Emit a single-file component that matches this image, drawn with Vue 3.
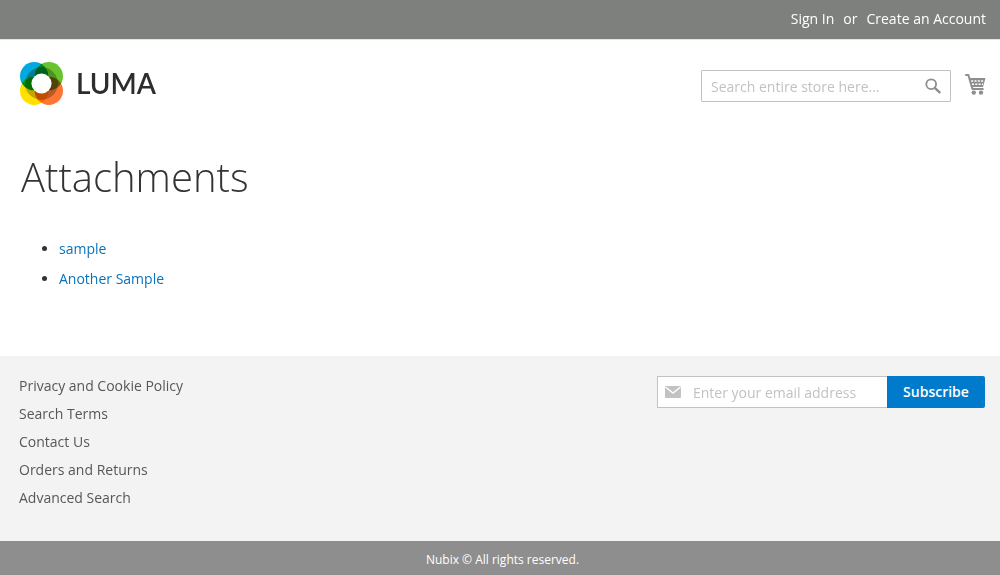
<script setup>
import { ref } from 'vue'

const query = ref('')
const email = ref('')
const attachments = ['sample', 'Another Sample']
const footerLinks = ['Privacy and Cookie Policy', 'Search Terms', 'Contact Us', 'Orders and Returns', 'Advanced Search']
</script>

<template>
  <div class="page">
    <div class="panel">
      <a href="#">Sign In</a>
      <span>or</span>
      <a href="#">Create an Account</a>
    </div>

    <header class="header">
      <a class="logo" href="#" aria-label="Luma">
        <svg class="mark" viewBox="0 0 44 44" aria-hidden="true">
          <g class="petals">
            <circle cx="14.5" cy="14.5" r="14.5" fill="#00a9e0" />
            <circle cx="29.5" cy="14.5" r="14.5" fill="#68c42c" />
            <circle cx="14.5" cy="29.5" r="14.5" fill="#ffe000" />
            <circle cx="29.5" cy="29.5" r="14.5" fill="#ff7536" />
            <circle cx="22" cy="22" r="16.8" fill="#bfbfa6" />
          </g>
          <circle cx="22" cy="22" r="10.3" fill="#fff" />
        </svg>
        <span class="wordmark">LUMA</span>
      </a>
      <form class="search" role="search" @submit.prevent>
        <input v-model="query" type="text" aria-label="Search" placeholder="Search entire store here..." />
        <button type="submit" aria-label="Search">
          <svg viewBox="0 0 16 16" width="16" height="16" aria-hidden="true">
            <circle cx="6.2" cy="6.2" r="4.9" fill="none" stroke="#8e8e8e" stroke-width="1.8" />
            <path d="M9.8 9.8 L14.6 14.3" stroke="#8e8e8e" stroke-width="2.4" stroke-linecap="round" />
          </svg>
        </button>
      </form>
      <a class="cart" href="#" aria-label="My Cart">
        <svg viewBox="0 0 21 22" width="21" height="22" aria-hidden="true">
          <path d="M1 2 H3.4 L7.4 16 H17.8" fill="none" stroke="#8e8e8e" stroke-width="2" stroke-linecap="round" stroke-linejoin="round" />
          <path d="M4 5 H20.5 L18 14 H6.6 Z" fill="#8e8e8e" />
          <path d="M6.2 8 H18.6 M7 11.3 H18" stroke="#fff" stroke-width="1.5" stroke-dasharray="2 1.3" />
          <circle cx="8.8" cy="19.6" r="2.2" fill="#8e8e8e" />
          <circle cx="16" cy="19.6" r="2.2" fill="#8e8e8e" />
        </svg>
      </a>
    </header>

    <main class="main">
      <h1>Attachments</h1>
      <ul>
        <li v-for="item in attachments" :key="item"><a href="#">{{ item }}</a></li>
      </ul>
    </main>

    <footer class="footer">
      <ul>
        <li v-for="link in footerLinks" :key="link"><a href="#">{{ link }}</a></li>
      </ul>
      <form class="newsletter" @submit.prevent>
        <div class="field">
          <svg viewBox="0 0 16 12" width="16" height="12" aria-hidden="true">
            <rect width="16" height="12" rx="1" fill="#c2c2c2" />
            <path d="M0.5 1 L8 7 L15.5 1" fill="none" stroke="#fff" stroke-width="1.4" />
          </svg>
          <input v-model="email" type="email" aria-label="Email address" placeholder="Enter your email address" />
        </div>
        <button type="submit">Subscribe</button>
      </form>
    </footer>
    <small class="copyright">Nubix © All rights reserved.</small>
  </div>
</template>

<style>
body {
  margin: 0;
  background: #fff;
}
</style>

<style scoped>
.page {
  min-height: 100vh;
  display: flex;
  flex-direction: column;
  font: 14px/20px "Open Sans", "Noto Sans", sans-serif;
  color: #333;
}
a {
  text-decoration: none;
}
ul {
  margin: 0;
  padding: 0;
}
svg {
  display: block;
}
input,
button {
  font: inherit;
  box-sizing: border-box;
}
input {
  min-width: 0;
  flex: 1;
  border: 0;
  padding: 2px 0 0;
  background: none;
  color: #333;
  outline: none;
}
input::placeholder {
  color: #c2c2c2;
  opacity: 1;
}
.panel {
  display: flex;
  justify-content: flex-end;
  gap: 9px;
  padding: 9px 14px 10px;
  background: #7e807e;
  border-bottom: 1px solid #e4e4e4;
  color: #fff;
}
.panel a {
  color: #fff;
}
.header {
  display: flex;
  align-items: flex-start;
  padding: 22px 14px 0 20px;
}
.logo {
  display: flex;
  align-items: flex-start;
  gap: 13px;
  margin-right: auto;
  color: #2d2d2f;
}
.mark {
  width: 43px;
  height: 43px;
}
.petals {
  isolation: isolate;
}
.petals circle {
  mix-blend-mode: multiply;
}
.wordmark {
  font: 600 28px/42px Lato, sans-serif;
}
.search {
  display: flex;
  align-items: center;
  box-sizing: border-box;
  width: 250px;
  height: 32px;
  margin-top: 8px;
  padding: 0 9px;
  background: #fff;
  border: 1px solid #c2c2c2;
  border-radius: 1px;
}
.search button {
  padding: 0;
  border: 0;
  background: none;
}
.cart {
  margin: 11px 0 0 14px;
}
.main {
  flex: 1;
  padding: 50px 21px 34px;
}
h1 {
  margin: 0 0 40px;
  font-size: 40px;
  font-weight: 300;
  line-height: 44px;
}
.main ul {
  padding-left: 38px;
}
.main li {
  margin-bottom: 10px;
}
.main li a {
  color: #0a72bb;
}
.footer {
  display: flex;
  justify-content: space-between;
  align-items: flex-start;
  padding: 20px 15px 25px 19px;
  background: #f3f3f3;
}
.footer ul {
  list-style: none;
}
.footer li {
  margin-bottom: 8px;
}
.footer li a {
  color: #575757;
}
.newsletter {
  display: flex;
  width: 328px;
  height: 32px;
}
.field {
  flex: 1;
  display: flex;
  align-items: center;
  gap: 12px;
  padding-left: 7px;
  background: #fff;
  border: 1px solid #c2c2c2;
  border-right: 0;
  border-radius: 1px 0 0 1px;
}
.newsletter button {
  width: 98px;
  padding: 0;
  border: 0;
  border-radius: 0 2px 2px 0;
  background: #007bcb;
  color: #fff;
  font-weight: 600;
}
.copyright {
  padding: 11px 15px 7px 20px;
  background: #8e8e8e;
  color: #fff;
  text-align: center;
  font-size: 12px;
  line-height: 16px;
}
</style>
